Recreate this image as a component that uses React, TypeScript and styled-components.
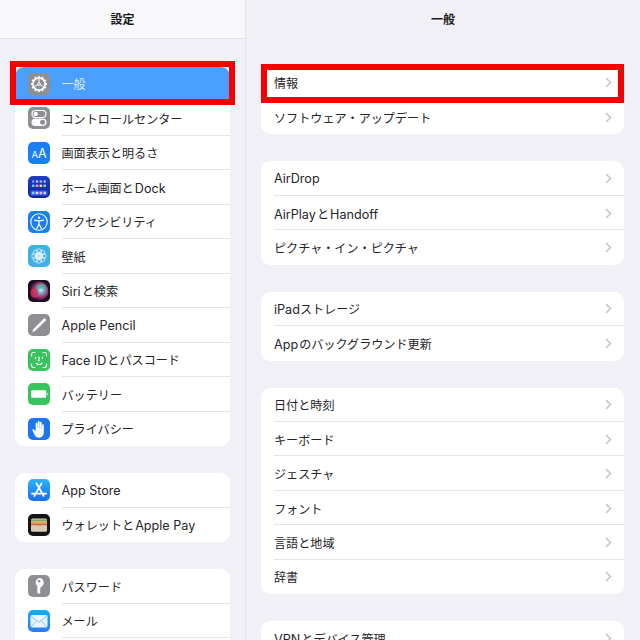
import React from "react";
import styled, { createGlobalStyle } from "styled-components";

const Global = createGlobalStyle`
  html, body { margin: 0; padding: 0; width: 640px; height: 640px; overflow: hidden; background: #f0f0f5; }
  body { font-family: Inter, "Noto Sans CJK JP", "Liberation Sans", sans-serif; color: #252527; -webkit-font-smoothing: antialiased; }
`;

const Screen = styled.div`
  display: grid;
  grid-template-columns: 245px 1fr;
  width: 640px;
  height: 640px;
  overflow: hidden;
`;
const Pane = styled.section<{ $side?: boolean }>`
  display: flex;
  flex-direction: column;
  min-width: 0;
  height: 640px;
  overflow: hidden;
  background: #f0f0f6;
  ${(p) => (p.$side ? "" : "border-left: 1px solid #e3e3e8;")}
`;
const Header = styled.header<{ $side?: boolean }>`
  flex: none;
  height: 37px;
  padding-bottom: 1px;
  display: flex;
  align-items: center;
  justify-content: center;
  font-size: 12px;
  font-weight: 700;
  color: #1a1a1c;
  ${(p) => (p.$side ? "background: #f8f8fa; border-bottom: 1px solid #e2e2e6;" : "border-bottom: 1px solid transparent;")}
`;
const Body = styled.div<{ $side?: boolean }>`
  flex: 1;
  display: flex;
  flex-direction: column;
  gap: 27px;
  padding: ${(p) => (p.$side ? "27.5px 15px 0 15px" : "26.5px 16px 0 15px")};
`;
const Card = styled.div`
  flex: none;
  background: #fff;
  border-radius: 9px;
`;
const Row = styled.div<{ $selected?: boolean; $side?: boolean }>`
  position: relative;
  height: ${(p) => (p.$side ? "34.5px" : "34.45px")};
  display: flex;
  align-items: center;
  gap: 11.5px;
  padding-left: 13px;
  font-size: 12.1px;
  white-space: nowrap;
  ${(p) => (p.$selected ? "background: #4b9ffd; color: #dcecff; border-radius: 9px 9px 0 0;" : "")}
`;
const Label = styled.div<{ $first?: boolean }>`
  flex: 1;
  align-self: stretch;
  display: flex;
  align-items: center;
  justify-content: space-between;
  padding-right: 12px;
  box-shadow: ${(p) => (p.$first ? "none" : "0 -1px 0 #e6e6e9")};
`;
const Latin = styled.span`
  font-size: 12.6px;
`;
const Tile = styled.div<{ $bg: string }>`
  flex: none;
  width: 22px;
  height: 22px;
  border-radius: 5px;
  background: ${(p) => p.$bg};
  overflow: hidden;
`;
const Glyph = styled.svg`
  display: block;
  width: 22px;
  height: 22px;
`;
const Highlight = styled.div<{ $wide?: boolean }>`
  position: absolute;
  z-index: 1;
  top: ${(p) => (p.$wide ? "-6px" : "-1.5px")};
  bottom: ${(p) => (p.$wide ? "-4px" : "-3.5px")};
  left: ${(p) => (p.$wide ? "-5.500px" : "0")};
  right: ${(p) => (p.$wide ? "-5px" : "0")};
  border: 6px solid #f90000;
  pointer-events: none;
`;

const Mixed = ({ text }: { text: string }) => (
  <span>
    {text.split(/([A-Za-z][A-Za-z ]*)/).map((part, i) =>
      i % 2 ? <Latin key={i}>{part}</Latin> : part
    )}
  </span>
);

const Gear = () => {
  const teeth = Array.from({ length: 12 }, (_, i) => i * 30);
  return (
    <Glyph viewBox="0 0 22 22">
      {teeth.map((a) => (
        <rect key={a} x="10.1" y="3" width="1.8" height="2.6" fill="#fff" transform={`rotate(${a} 11 11)`} />
      ))}
      <circle cx="11" cy="11" r="6.2" fill="none" stroke="#fff" strokeWidth="1.7" />
      <g stroke="#fff" strokeWidth="1" fill="none">
        <circle cx="11" cy="11" r="1.3" />
        <path d="M11 9.7V5.5M9.9 11.7 6.2 13.8M12.1 11.7l3.7 2.1" />
      </g>
    </Glyph>
  );
};
const Toggles = () => (
  <Glyph viewBox="0 0 22 22">
    <rect x="4" y="3.5" width="14" height="7" rx="3.5" fill="none" stroke="#fff" strokeWidth="1.2" />
    <circle cx="7.6" cy="7" r="2.2" fill="#fff" />
    <rect x="3.5" y="11.5" width="15" height="7.5" rx="3.75" fill="#fff" />
    <circle cx="14.6" cy="15.25" r="2.5" fill="#8e8e93" />
  </Glyph>
);
const AaText = () => (
  <Glyph viewBox="0 0 22 22">
    <text x="11" y="15.6" textAnchor="middle" fill="#fff" fontFamily="Inter, sans-serif">
      <tspan fontSize="9.5">A</tspan>
      <tspan fontSize="12.5">A</tspan>
    </text>
  </Glyph>
);
const HomeGrid = () => {
  const rows = [
    ["#7d8cf5", "#c7b1f2", "#9fb0f7", "#a8b5f8"],
    ["#5fd0e8", "#f29bb0", "#ffd27a", "#8fe0a0"],
  ];
  return (
    <Glyph viewBox="0 0 22 22">
      {rows.map((r, y) =>
        r.map((c, x) => <rect key={`${x}${y}`} x={4 + x * 3.8} y={4.2 + y * 4.4} width="2.5" height="2.5" rx=".7" fill={c} />)
      )}
      <rect x="2.5" y="14.5" width="17" height="5" rx="1.5" fill="#3f63d8" />
      {["#7fdcf0", "#d8e8ff", "#f5b8c8", "#c7d8ff"].map((c, x) => (
        <rect key={c} x={4 + x * 3.8} y="15.7" width="2.5" height="2.5" rx=".7" fill={c} />
      ))}
    </Glyph>
  );
};
const Access = () => (
  <Glyph viewBox="0 0 22 22">
    <circle cx="11" cy="11" r="8.2" fill="none" stroke="#fff" strokeWidth="1.1" />
    <circle cx="11" cy="6.8" r="1.3" fill="#fff" />
    <path d="M6.5 9.2c3 .9 6 .9 9 0M11 9.8v3.2M11 13l-2.200 4.300M11 13l2.200 4.300" fill="none" stroke="#fff" strokeWidth="1.300" strokeLinecap="round" strokeLinejoin="round" />
  </Glyph>
);
const Flower = () => {
  const petals = Array.from({ length: 8 }, (_, i) => i * 45);
  return (
    <Glyph viewBox="0 0 22 22">
      <g fill="none" stroke="#e6f5fc" strokeWidth=".8">
        {petals.map((a) => (
          <circle key={a} cx="11" cy="6.4" r="2.6" transform={`rotate(${a} 11 11)`} />
        ))}
        {petals.map((a) => (
          <circle key={a} cx="11" cy="8.6" r="1.5" transform={`rotate(${a + 22} 11 11)`} />
        ))}
      </g>
    </Glyph>
  );
};
const Siri = () => (
  <Glyph viewBox="0 0 22 22">
    <defs>
      <radialGradient id="siriA" cx="60%" cy="45%" r="55%">
        <stop offset="0" stopColor="#dcecf4" />
        <stop offset=".3" stopColor="#6ab4c4" />
        <stop offset=".65" stopColor="#a03a78" />
        <stop offset="1" stopColor="#3a1030" />
      </radialGradient>
    </defs>
    <circle cx="11" cy="11" r="9.500" fill="url(#siriA)" />
    <ellipse cx="6.4" cy="13" rx="3.800" ry="4.800" fill="#d8325f" opacity=".8" />
    <ellipse cx="13" cy="6.500" rx="4.500" ry="2.600" fill="#3fbf9f" opacity=".6" />
  </Glyph>
);
const Pencil = () => (
  <Glyph viewBox="0 0 22 22">
    <path d="M16.4 4 18.4 6 7.6 16.6 4 18.4l1.7-3.6z" fill="#fff" />
  </Glyph>
);
const FaceId = () => (
  <Glyph viewBox="0 0 22 22">
    <g fill="none" stroke="#fff" strokeWidth="1.2" strokeLinecap="round">
      <path d="M3.5 7V5.500a2 2 0 0 1 2-2H7M15 3.500h1.500a2 2 0 0 1 2 2V7M18.500 15v1.500a2 2 0 0 1-2 2H15M7 18.500H5.500a2 2 0 0 1-2-2V15" />
      <path d="M7.500 8v1.500M14.500 8v1.500M11 8v3.600h-.8M8 14.200c1.700 1.500 4.300 1.500 6 0" />
    </g>
  </Glyph>
);
const Battery = () => (
  <Glyph viewBox="0 0 22 22">
    <rect x="3.200" y="7.300" width="15" height="7.400" rx="1.200" fill="#fff" />
    <rect x="18.800" y="9.800" width="1" height="2.400" rx=".5" fill="#bff0c9" />
  </Glyph>
);
const Hand = () => (
  <Glyph viewBox="0 0 22 22">
    <path
      d="M7.700 11V5.700a.9.900 0 0 1 1.800 0V10h.3V3.900a.9.900 0 0 1 1.800 0V10h.3V4.700a.9.900 0 0 1 1.800 0V11h.3V7.200a.9.900 0 0 1 1.800 0v7.300c0 3-1.900 5.200-4.700 5.200-2.300 0-3.500-1-4.400-2.700L4.500 12.500c-.5-1 .9-1.800 1.600-.9l1.300 1.700h.3z"
      fill="#fff"
    />
  </Glyph>
);
const AppStore = () => (
  <Glyph viewBox="0 0 22 22">
    <g fill="none" stroke="#fff" strokeWidth="1.700" strokeLinecap="round">
      <path d="M8.500 4.500 15.700 17M13.500 4.500 6.300 17M4 14.700h14" />
    </g>
  </Glyph>
);
const Wallet = () => (
  <Glyph viewBox="0 0 22 22">
    <rect x="3" y="4.500" width="16" height="13" rx="1.500" fill="#d8cbb4" />
    <rect x="3" y="5.500" width="16" height="2" fill="#7fa86a" />
    <rect x="3" y="7.500" width="16" height="2" fill="#e3b04c" />
    <rect x="3" y="9.500" width="16" height="2" fill="#d9674e" />
    <path d="M3 11.500h5.500c.5 1.500 1.400 2.200 2.500 2.200s2-.7 2.500-2.200H19v5a1 1 0 0 1-1 1H4a1 1 0 0 1-1-1z" fill="#d8cbb4" />
  </Glyph>
);
const Key = () => (
  <Glyph viewBox="0 0 22 22">
    <path
      d="M11 3a4.600 4.600 0 0 1 1.700 8.900v1.200l-1 1 1 1.100-1 1 1 1-1.700 1.800-1.700-1.600v-6.500A4.600 4.600 0 0 1 11 3z"
      fill="#fff"
    />
    <circle cx="11" cy="6.200" r="1.300" fill="#8e8e93" />
  </Glyph>
);
const Mail = () => (
  <Glyph viewBox="0 0 22 22">
    <rect x="2.500" y="5" width="17" height="12.500" rx="1.500" fill="#eaf6ff" />
    <path d="M2.800 5.700 11 12.300l8.200-6.600M3 17l5.800-6.500M19 17l-5.800-6.500" fill="none" stroke="#5ab0ee" strokeWidth=".7" />
  </Glyph>
);
const Chevron = () => (
  <svg width="7" height="11" viewBox="0 0 7 11" style={{ flex: "none" }}>
    <path d="M1 1l4.500 4.500L1 10" fill="none" stroke="#c4c4c8" strokeWidth="1.500" />
  </svg>
);

type SideItem = { label: string; bg: string; icon: React.ReactNode; selected?: boolean };

const sideGroups: SideItem[][] = [
  [
    { label: "一般", bg: "#8e8e93", icon: <Gear />, selected: true },
    { label: "コントロールセンター", bg: "#8e8e93", icon: <Toggles /> },
    { label: "画面表示と明るさ", bg: "#1a7ff5", icon: <AaText /> },
    { label: "ホーム画面と\u200aDock", bg: "linear-gradient(#1f3fc4,#12269a)", icon: <HomeGrid /> },
    { label: "アクセシビリティ", bg: "#1a7ff5", icon: <Access /> },
    { label: "壁紙", bg: "#3fb0e4", icon: <Flower /> },
    { label: "Siri\u200aと検索", bg: "#1c1020", icon: <Siri /> },
    { label: "Apple Pencil", bg: "#8e8e93", icon: <Pencil /> },
    { label: "Face ID\u200aとパスコード", bg: "#38c45c", icon: <FaceId /> },
    { label: "バッテリー", bg: "#38c45c", icon: <Battery /> },
    { label: "プライバシー", bg: "#1a76f2", icon: <Hand /> },
  ],
  [
    { label: "App Store", bg: "linear-gradient(#2fb4f8,#1670f0)", icon: <AppStore /> },
    { label: "ウォレットと\u200aApple Pay", bg: "#141416", icon: <Wallet /> },
  ],
  [
    { label: "パスワード", bg: "#8e8e93", icon: <Key /> },
    { label: "メール", bg: "linear-gradient(#1fa8f8,#2a7cf0)", icon: <Mail /> },
    { label: "", bg: "#8e8e93", icon: null },
  ],
];

const mainGroups: string[][] = [
  ["情報", "ソフトウェア・アップデート"],
  ["AirDrop", "AirPlay\u200aと\u200aHandoff", "ピクチャ・イン・ピクチャ"],
  ["iPadストレージ", "App\u200aのバックグラウンド更新"],
  ["日付と時刻", "キーボード", "ジェスチャ", "フォント", "言語と地域", "辞書"],
  ["VPN\u200aとデバイス管理"],
];

export default function App() {
  return (
    <Screen>
      <Global />
      <Pane $side>
        <Header $side>設定</Header>
        <Body $side>
          {sideGroups.map((group, g) => (
            <Card key={g}>
              {group.map((item, i) => (
                <Row key={i} $side $selected={item.selected}>
                  <Tile $bg={item.bg}>{item.icon}</Tile>
                  <Label $first={i === 0}>
                    <Mixed text={item.label} />
                  </Label>
                  {item.selected && <Highlight $wide />}
                </Row>
              ))}
            </Card>
          ))}
        </Body>
      </Pane>
      <Pane>
        <Header>一般</Header>
        <Body>
          {mainGroups.map((group, g) => (
            <Card key={g}>
              {group.map((label, i) => (
                <Row key={label}>
                  <Label $first={i === 0}>
                    <Mixed text={label} />
                    <Chevron />
                  </Label>
                  {g === 0 && i === 0 && <Highlight />}
                </Row>
              ))}
            </Card>
          ))}
        </Body>
      </Pane>
    </Screen>
  );
}
